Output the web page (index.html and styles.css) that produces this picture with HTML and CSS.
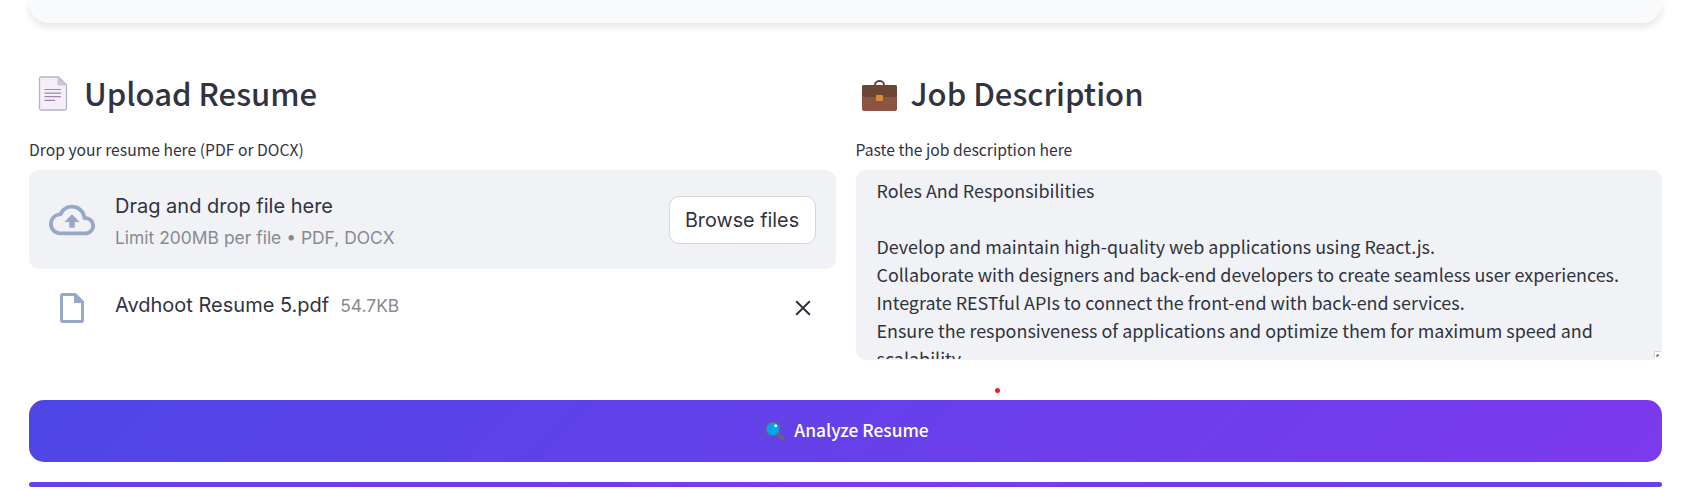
FILE: index.html
```html
<!DOCTYPE html>
<html lang="en">
<head>
<meta charset="utf-8">
<title>Resume Analyzer</title>
<link rel="stylesheet" href="styles.css">
</head>
<body>
<main class="page">
  <div class="intro-card"></div>
  <div class="columns">
    <section class="column">
      <h2 class="heading">
        <svg class="heading-icon" viewBox="0 0 46 40">
          <path d="M12 2h17.500l8 8v23.500a1.500 1.500 0 0 1-1.500 1.500H12a1.500 1.500 0 0 1-1.500-1.500V3.500a1.500 1.500 0 0 1 1.500-1.500z" fill="#f3eef8" stroke="#bbb1c5" stroke-width="1.300" stroke-linejoin="round"/>
          <path d="M28.500 2v7q0 1.500 1.500 1.500H37.500z" fill="#cdc4d6"/>
          <path d="M16 14.500h15.500M16 18.100h15.500M16 21.700h15.500M16 25.400h9.500" stroke="#9a87ab" stroke-width="1.200" stroke-linecap="round"/>
        </svg>
        <span class="heading-text">Upload Resume</span>
      </h2>
      <p class="label">Drop your resume here (PDF or DOCX)</p>
      <div class="dropzone">
        <svg class="cloud" viewBox="0 0 24 24" fill="#98a8c8"><path d="M19.350 10.040A7.490 7.490 0 0 0 12 4C9.110 4 6.600 5.640 5.350 8.040A5.994 5.994 0 0 0 0 14c0 3.310 2.690 6 6 6h13c2.760 0 5-2.240 5-5 0-2.640-2.050-4.780-4.650-4.960zM19 18H6c-2.210 0-4-1.790-4-4 0-2.050 1.530-3.760 3.560-3.970l1.070-.11.500-.95A5.469 5.469 0 0 1 12 6c2.620 0 4.880 1.860 5.390 4.430l.3 1.500 1.530.11A2.980 2.980 0 0 1 22 15c0 1.650-1.350 3-3 3zM8 13h2.550v3h2.900v-3H16l-4-4z"/></svg>
        <div class="drop-text">
          <span class="drop-title">Drag and drop file here</span>
          <span class="drop-limit">Limit 200MB per file • PDF, DOCX</span>
        </div>
        <button class="browse">Browse files</button>
      </div>
      <div class="file-row">
        <svg class="file-icon" viewBox="0 0 24 30"><path d="M2.800 1.500h12.400l7.300 7.300v18.400a1.300 1.300 0 0 1-1.300 1.300H2.800a1.300 1.300 0 0 1-1.300-1.300V2.800a1.300 1.300 0 0 1 1.300-1.300z" fill="none" stroke="#98a8c8" stroke-width="3"/><path d="M14 1v9h9z" fill="#98a8c8"/></svg>
        <span class="file-name">Avdhoot Resume 5.pdf</span>
        <span class="file-size">54.7KB</span>
        <svg class="close" viewBox="0 0 16 16"><path d="M1.700 1.700l12.600 12.600M14.300 1.700L1.700 14.300" stroke="#31333f" stroke-width="2" stroke-linecap="round"/></svg>
      </div>
    </section>
    <section class="column">
      <h2 class="heading">
        <svg class="heading-icon" viewBox="0 0 46 40">
          <path d="M19 11v-1c0-5.200 9-5.200 9 0v1" fill="none" stroke="#6d4534" stroke-width="2"/>
          <rect x="6" y="10" width="35" height="26" rx="2" fill="#8c5543"/>
          <path d="M8 10h31a2 2 0 0 1 2 2v7.500a3 3 0 0 1-3 2.500H9a3 3 0 0 1-3-2.500V12a2 2 0 0 1 2-2z" fill="#6d4534"/>
          <rect x="20" y="20" width="7" height="6" rx=".8" fill="#d68b3c"/>
        </svg>
        <span class="heading-text">Job Description</span>
      </h2>
      <p class="label">Paste the job description here</p>
      <div class="editor">
        <textarea class="job-text" spellcheck="false">Roles And Responsibilities

Develop and maintain high-quality web applications using React.js.
Collaborate with designers and back-end developers to create seamless user experiences.
Integrate RESTful APIs to connect the front-end with back-end services.
Ensure the responsiveness of applications and optimize them for maximum speed and
scalability.</textarea>
        <svg class="grip" viewBox="0 0 8 8"><path d="M0 0h8v4L4 8H0z" fill="#fff"/><path d="M.5 7V.5H7" fill="none" stroke="#d4d4d4"/><path d="M2.500 5.500l2-2" stroke="#444" stroke-width="1.500"/></svg>
      </div>
    </section>
  </div>
  <div class="dot-row"><i class="dot"></i></div>
  <button class="analyze">
    <svg class="lens" viewBox="0 0 21 21"><path d="M13 13l5 5" stroke="#685e92" stroke-width="4" stroke-linecap="round"/><circle cx="8" cy="8" r="7" fill="#00a6ed" stroke="#5d628f" stroke-width="1.500"/><circle cx="10.700" cy="4.800" r="1.500" fill="#e4f7ff"/></svg>
    <span class="analyze-text">Analyze Resume</span>
  </button>
  <div class="progress"></div>
</main>
</body>
</html>
```
FILE: styles.css
```css
* { box-sizing: border-box; }
body { margin: 0; height: 490px; overflow: hidden; background: #fff; color: #31333f; font-family: "Noto Sans CJK SC", "Noto Sans", sans-serif; }
.page { display: flex; flex-direction: column; padding: 0 25px 0 29px; }
.intro-card { height: 23px; background: #f8fafc; border-radius: 0 0 20px 20px; box-shadow: 0 4px 8px rgba(0, 0, 0, .1); }
.columns { display: grid; grid-template-columns: 1fr 1fr; gap: 20px; height: 337px; padding-top: 49px; }
.column { min-width: 0; }
.heading { display: flex; align-items: center; margin: 0; height: 46px; font-size: 31.050px; font-weight: 500; line-height: 46px; white-space: nowrap; }
.heading-icon { width: 46px; height: 40px; margin: 0 9px 0 0; flex: none; }
.heading-text { padding-bottom: 4px; }
.label { margin: 19px 0 7px; height: 26px; font-size: 15.700px; line-height: 26px; white-space: nowrap; }
.dropzone { display: flex; align-items: center; height: 99px; padding: 0 20px; background: #f0f2f6; border-radius: 10px; }
.cloud { width: 46px; height: 46px; margin-right: 20px; }
.drop-text { display: flex; flex-direction: column; padding-top: 3px; font-family: Inter, sans-serif; font-weight: 400; white-space: nowrap; }
.drop-title { font-size: 20px; line-height: 32px; }
.drop-limit { font-size: 17.450px; line-height: 31px; color: #888a92; }
.browse { width: 147px; height: 48px; margin-left: auto; padding: 0; border: 1px solid #d5d6da; border-radius: 10px; background: #fff; color: #31333f; font: 400 19.800px/30px Inter, sans-serif; }
.file-row { display: flex; align-items: center; height: 77px; padding: 0 25px 0 31px; font-family: Inter, sans-serif; font-weight: 400; }
.file-icon { width: 24px; height: 30px; margin-right: 31px; }
.file-name { padding-bottom: 5px; font-size: 20px; }
.file-size { margin-left: 11px; padding-bottom: 4px; font-size: 17.450px; color: #888a92; }
.close { width: 16px; height: 16px; margin-left: auto; }
.editor { position: relative; height: 190px; padding: 6px 1px 1px 21px; border-radius: 10px; background: #f0f2f6; overflow: hidden; }
.job-text { display: block; width: 100%; height: 183px; margin: 0; padding: 0; border: 0; outline: 0; resize: none; overflow: hidden; white-space: pre; background: transparent; color: #31333f; font: 400 17.910px/28px "Noto Sans CJK SC", "Noto Sans", sans-serif; }
.grip { position: absolute; right: 0; bottom: 1px; width: 8px; height: 8px; }
.dot-row { height: 40px; padding: 28px 0 0 966px; }
.dot { display: block; width: 5px; height: 5px; border-radius: 50%; background: #ed1c24; }
.analyze { display: flex; align-items: center; justify-content: center; gap: 8px; height: 62px; padding: 0 0 0 3px; border: 0; border-radius: 15px; background: linear-gradient(135deg, #4f46e5, #7c3aed); color: #fff; font: 500 17.400px/30px "Noto Sans CJK SC", "Noto Sans", sans-serif; }
.lens { width: 21px; height: 21px; }
.analyze-text { padding-bottom: 2px; }
.progress { height: 5px; margin-top: 20px; border-radius: 3px; background: linear-gradient(90deg, #6640e9, #7c3aed, #6640e9); }
```
